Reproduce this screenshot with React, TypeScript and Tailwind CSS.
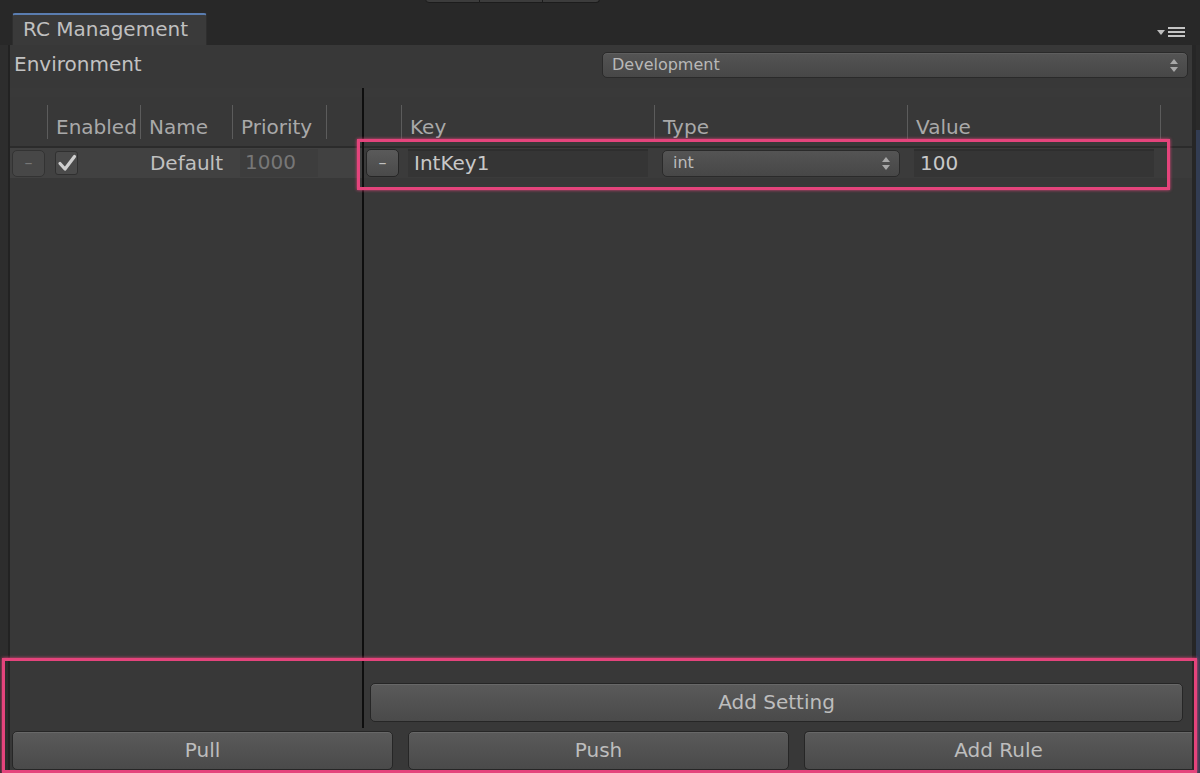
import React from "react";

const btn =
  "flex items-center justify-center pb-[2px] rounded-[5px] border border-[#262626] bg-linear-to-b from-[#5a5a5a] to-[#4a4a4a] shadow-[inset_0_1px_0_#686868] text-[20px] text-[#bdbdbd]";

const Arrows = () => (
  <svg width="8" height="15" viewBox="0 0 8 15" className="shrink-0">
    <polygon points="0,6 4,1 8,6" fill="#a8a8a8" />
    <polygon points="0,9 4,14 8,9" fill="#a8a8a8" />
  </svg>
);

const HeaderCell = ({ w, label }: { w: string; label?: string }) => (
  <div className={`flex h-full pt-[8px] pb-[7px] ${w}`}>
    <div className="w-px bg-[#5c5c5c]" />
    {label && <span className="self-end pl-[8px] leading-[24px] text-[#a9a9a9]">{label}</span>}
  </div>
);

const App = () => {
  return (
    <div className="relative flex h-[773px] w-full flex-col overflow-hidden bg-[#282828] font-['DejaVu_Sans',sans-serif] text-[20px] text-[#bcbcbc]">
      {/* cut off toolbar at the very top */}
      <div className="absolute left-[425px] top-[-10px] flex h-[13px]">
        <div className="w-[55px] rounded-bl-[4px] border border-[#1c1c1c] bg-[#3c3c3c]" />
        <div className="w-[63px] border-y border-r border-[#1c1c1c] bg-[#3c3c3c]" />
        <div className="w-[57px] rounded-br-[4px] border-y border-r border-[#1c1c1c] bg-[#3c3c3c]" />
      </div>

      {/* tab bar */}
      <div className="flex h-[45px] shrink-0 items-end pl-[12px]">
        <div className="h-[32px] w-[195px] rounded-t-[3px] border-t-2 border-x border-x-[#2e2e2e] border-t-[#5a7db0] bg-[#3a3a3a] pl-[10px] leading-[28px] text-[#c0c0c0]">
          RC Management
        </div>
        <div className="mb-[8px] ml-auto mr-[15px] flex items-center gap-[3px]">
          <svg width="8" height="5" viewBox="0 0 8 5">
            <polygon points="0,0 8,0 4,5" fill="#bdbdbd" />
          </svg>
          <div className="flex w-[17px] flex-col gap-[2px]">
            <div className="h-[2px] bg-[#c4c4c4]" />
            <div className="h-[2px] bg-[#c4c4c4]" />
            <div className="h-[2px] bg-[#c4c4c4]" />
          </div>
        </div>
      </div>

      <div className="flex min-h-0 flex-1">
        <div className="w-[10px] border-r-2 border-[#222] bg-[#2d2d2d]" />

        <div className="flex min-w-0 flex-1 flex-col bg-[#383838]">
          {/* environment */}
          <div className="flex h-[43px] shrink-0 items-start justify-between pl-[4px] pr-[4px] pt-[7px]">
            <span className="leading-[24px] text-[#c2c2c2]">Environment</span>
            <div className="flex h-[26px] w-[586px] items-center justify-between rounded-[5px] border border-[#2a2a2a] bg-linear-to-b from-[#545454] to-[#474747] pl-[9px] pr-[9px] text-[16px] text-[#b8b8b8] shadow-[inset_0_1px_0_#5e5e5e]">
              <span>Development</span>
              <Arrows />
            </div>
          </div>

          <div className="flex min-h-0 flex-1">
            {/* rules */}
            <div className="flex w-[352px] shrink-0 flex-col">
              <div className="h-[9px] bg-[#393939]" />
              <div className="flex h-[51px] border-b-2 border-[#2b2b2b]">
                <div className="w-[37px]" />
                <HeaderCell w="w-[93px]" label="Enabled" />
                <HeaderCell w="w-[92px]" label="Name" />
                <HeaderCell w="w-[94px]" label="Priority" />
                <HeaderCell w="flex-1" />
              </div>
              <div className="flex h-[30px] items-center bg-[#414141]">
                <div className="ml-[2px] flex h-[27px] w-[33px] items-center justify-center rounded-[5px] border border-[#333] bg-[#474747] text-[16px] text-[#777]">
                  –
                </div>
                <div className="ml-[10px] flex h-[24px] w-[23px] items-center justify-center rounded-[3px] border border-[#303030] bg-[#4a4a4a]">
                  <svg width="20" height="18" viewBox="0 0 20 18">
                    <path d="M3 9.5 L8 15 L17.5 2.5" fill="none" stroke="#cfcfcf" strokeWidth="3.2" strokeLinecap="round" strokeLinejoin="round" />
                  </svg>
                </div>
                <div className="w-[162px] pr-[17px] text-right leading-[28px] text-[#c0c0c0]">Default</div>
                <div className="flex h-[28px] w-[78px] items-center bg-[#3d3d3d] pb-[2px] pl-[5px] text-[#777]">1000</div>
              </div>
            </div>

            <div className="w-[2px] bg-[#0e0e0e]" />

            {/* settings */}
            <div className="flex min-w-0 flex-1 flex-col">
              <div className="h-[9px] bg-[#393939]" />
              <div className="flex h-[51px] border-b-2 border-[#2b2b2b]">
                <div className="w-[37px]" />
                <HeaderCell w="w-[253px]" label="Key" />
                <HeaderCell w="w-[253px]" label="Type" />
                <HeaderCell w="w-[253px]" label="Value" />
                <HeaderCell w="flex-1" />
              </div>
              <div className="flex h-[30px] items-center bg-[#3b3b3b]">
                <div className="ml-[2px] flex h-[28px] w-[33px] items-center justify-center rounded-[5px] border border-[#262626] bg-linear-to-b from-[#5a5a5a] to-[#4a4a4a] text-[16px] text-[#c0c0c0]">
                  –
                </div>
                <div className="ml-[9px] flex h-[28px] w-[240px] items-center border-t-2 border-[#2e2e2e] bg-[#353535] pb-[2px] pl-[6px] text-[#c8c8c8]">
                  IntKey1
                </div>
                <div className="ml-[14px] flex h-[27px] w-[238px] items-center justify-between rounded-[5px] border border-[#2a2a2a] bg-linear-to-b from-[#545454] to-[#474747] pl-[10px] pr-[9px] text-[16px] text-[#bcbcbc]">
                  <span>int</span>
                  <Arrows />
                </div>
                <div className="ml-[14px] flex h-[28px] w-[240px] items-center border-t-2 border-[#2e2e2e] bg-[#353535] pb-[2px] pl-[6px] text-[#c8c8c8]">
                  100
                </div>
              </div>
              <div className="flex-1" />
              <div className={`mb-[6px] ml-[6px] mr-[9px] h-[39px] ${btn}`}>Add Setting</div>
            </div>
          </div>

          {/* bottom buttons */}
          <div className="flex h-[45px] shrink-0 gap-[15px] pb-[3px] pl-[2px] pt-[3px]">
            <div className={`w-[381px] ${btn}`}>Pull</div>
            <div className={`w-[381px] ${btn}`}>Push</div>
            <div className={`flex-1 rounded-r-none border-r-0 ${btn}`}>Add Rule</div>
          </div>
        </div>

        <div className="flex w-[8px]">
          <div className="w-[4px] bg-[#262626]" />
          <div className="flex w-[4px] flex-col">
            <div className="h-[85px] bg-[#2a2a2a]" />
            <div className="flex-1 bg-[#323c52]" />
          </div>
        </div>
      </div>

      {/* annotation frames */}
      <div className="pointer-events-none absolute left-[357px] top-[139px] h-[51px] w-[813px] border-[3px] border-[#e4447c] shadow-[0_0_3px_#e4447c]" />
      <div className="pointer-events-none absolute left-[2px] top-[658px] h-[115px] w-[1195px] border-[3px] border-[#e4447c] shadow-[0_0_3px_#e4447c]" />
    </div>
  );
};

export default App;
